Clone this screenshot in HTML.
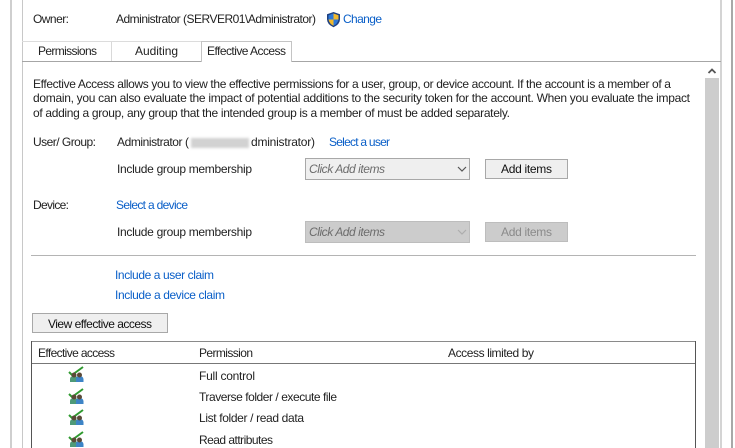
<!DOCTYPE html>
<html><head><meta charset="utf-8"><style>
html,body{margin:0;padding:0;background:#fff;width:735px;height:448px;overflow:hidden}
svg{display:block}
text{font-family:"Liberation Sans",sans-serif;font-size:12px;fill:#222}
.l{fill:#0a5fc8}
.g{fill:#6c6c6c;font-style:italic}
.d{fill:#8a8a8a}
</style></head><body>
<svg width="735" height="448" viewBox="0 0 735 448" xmlns="http://www.w3.org/2000/svg">
<defs>
<filter id="b" x="-20%" y="-50%" width="140%" height="200%"><feGaussianBlur stdDeviation="1.400"/></filter>
<g id="u">
<path d="M0 4l3 3L14-1" fill="none" stroke="#2f9a2f" stroke-width="2"/>
<path d="M1 14v-3q0-3 4-3t4 3v3z" fill="#4e9a78"/><circle cx="5" cy="7" r="2.500" fill="#5a4a38"/>
<path d="M7 14v-3q0-3 3.500-3t4 3v3z" fill="#3d84c6"/><circle cx="10.500" cy="7" r="2.500" fill="#5a4a38"/>
</g>
</defs>
<rect x="10" y="0" width="2" height="448" fill="#cfcfcf"/>
<rect x="22" y="0" width="1" height="448" fill="#c8c8c8"/>
<rect x="720" y="0" width="2" height="448" fill="#d4d4d4"/>
<rect x="731" y="0" width="2" height="448" fill="#a8a8a8"/>

<text x="33" y="23" textLength="36" lengthAdjust="spacing">Owner:</text>
<text x="116" y="23" textLength="200" lengthAdjust="spacing">Administrator (SERVER01\Administrator)</text>
<path d="M333.500 12l6.500 2.300v5q0 5-6.500 8-6.500-3-6.500-8v-5z" fill="#1d3f80"/>
<path d="M333.500 13.500v6h-5v-4.300z" fill="#2d78d8"/><path d="M333.500 13.500l5 1.700v4.300h-5z" fill="#f2b92b"/>
<path d="M328.500 19.500h5v6.300q-4-1.800-5-6.300z" fill="#f2b92b"/><path d="M333.500 19.500h5q-1 4.500-5 6.300z" fill="#2d78d8"/>
<text class="l" x="343" y="23" textLength="39" lengthAdjust="spacing">Change</text>

<rect x="22" y="61" width="699" height="1" fill="#a6a6a6"/>
<rect x="22" y="41" width="180" height="1" fill="#dcdcdc"/>
<rect x="111" y="42" width="1" height="19" fill="#d9d9d9"/>
<path d="M201.500 62V41.500h90V62" fill="#fff" stroke="#c4c4c4"/>
<rect x="202" y="60" width="89" height="3" fill="#fff"/>
<text x="38" y="55" textLength="59" lengthAdjust="spacing">Permissions</text>
<text x="135" y="55" textLength="43" lengthAdjust="spacing">Auditing</text>
<text x="207" y="55" textLength="79" lengthAdjust="spacing">Effective Access</text>

<text x="33" y="88" textLength="638" lengthAdjust="spacing">Effective Access allows you to view the effective permissions for a user, group, or device account. If the account is a member of a</text>
<text x="33" y="102" textLength="657" lengthAdjust="spacing">domain, you can also evaluate the impact of potential additions to the security token for the account. When you evaluate the impact</text>
<text x="33" y="117" textLength="477" lengthAdjust="spacing">of adding a group, any group that the intended group is a member of must be added separately.</text>

<path d="M708.500 73l3.500-3.500 3.500 3.500" fill="none" stroke="#555" stroke-width="1.800"/>
<rect x="705" y="78" width="14" height="370" fill="#cdcdcd"/>

<text x="33" y="146" textLength="63" lengthAdjust="spacing">User/ Group:</text>
<text x="117" y="146" textLength="72" lengthAdjust="spacing">Administrator (</text>
<rect x="191" y="138" width="58" height="10" fill="#d2d2d2" filter="url(#b)"/>
<text x="251" y="146" textLength="64" lengthAdjust="spacing">dministrator)</text>
<text class="l" x="329" y="146" textLength="61" lengthAdjust="spacing">Select a user</text>
<text x="117" y="173" textLength="135" lengthAdjust="spacing">Include group membership</text>
<rect x="305.500" y="158.500" width="164" height="21" fill="#efefef" stroke="#a8a8a8"/>
<text class="g" x="309" y="173" textLength="76" lengthAdjust="spacing">Click Add items</text>
<path d="M458 167l4 4 4-4" fill="none" stroke="#555" stroke-width="1.200"/>
<rect x="485.500" y="159.500" width="82" height="19" fill="#efefef" stroke="#a8a8a8"/>
<text x="501" y="173" textLength="51" lengthAdjust="spacing" style="fill:#111">Add items</text>

<text x="33" y="209" textLength="36" lengthAdjust="spacing">Device:</text>
<text class="l" x="116" y="209" textLength="72" lengthAdjust="spacing">Select a device</text>
<text x="117" y="236" textLength="135" lengthAdjust="spacing">Include group membership</text>
<rect x="305.500" y="221.500" width="164" height="21" fill="#cccccc" stroke="#bdbdbd"/>
<text class="g" x="309" y="236" textLength="76" lengthAdjust="spacing">Click Add items</text>
<path d="M458 230l4 4 4-4" fill="none" stroke="#adadad" stroke-width="1.200"/>
<rect x="485.500" y="222.500" width="82" height="19" fill="#cccccc" stroke="#bdbdbd"/>
<text class="d" x="501" y="236" textLength="51" lengthAdjust="spacing">Add items</text>

<rect x="31" y="255" width="665" height="1" fill="#b4b4b4"/>
<text class="l" x="115" y="279" textLength="99" lengthAdjust="spacing">Include a user claim</text>
<text class="l" x="115" y="299" textLength="110" lengthAdjust="spacing">Include a device claim</text>

<rect x="32.500" y="313.500" width="135" height="19" fill="#efefef" stroke="#a8a8a8"/>
<text x="48" y="328" textLength="104" lengthAdjust="spacing" style="fill:#111">View effective access</text>

<path d="M31.500 448V341.500h664V448" fill="#fff" stroke="#555"/>
<rect x="32" y="341" width="663" height="1" fill="#8a8a8a"/>
<rect x="32" y="363" width="663" height="1" fill="#777"/>
<text x="38" y="357" textLength="77" lengthAdjust="spacing">Effective access</text>
<text x="199" y="357" textLength="54" lengthAdjust="spacing">Permission</text>
<text x="448" y="357" textLength="86" lengthAdjust="spacing">Access limited by</text>

<use href="#u" x="69" y="368"/>
<text x="199" y="380" textLength="56" lengthAdjust="spacing">Full control</text>
<use href="#u" x="69" y="390"/>
<text x="199" y="401" textLength="138" lengthAdjust="spacing">Traverse folder / execute file</text>
<use href="#u" x="69" y="411"/>
<text x="199" y="422" textLength="105" lengthAdjust="spacing">List folder / read data</text>
<use href="#u" x="69" y="433"/>
<text x="199" y="444" textLength="74" lengthAdjust="spacing">Read attributes</text>
</svg>
</body></html>
